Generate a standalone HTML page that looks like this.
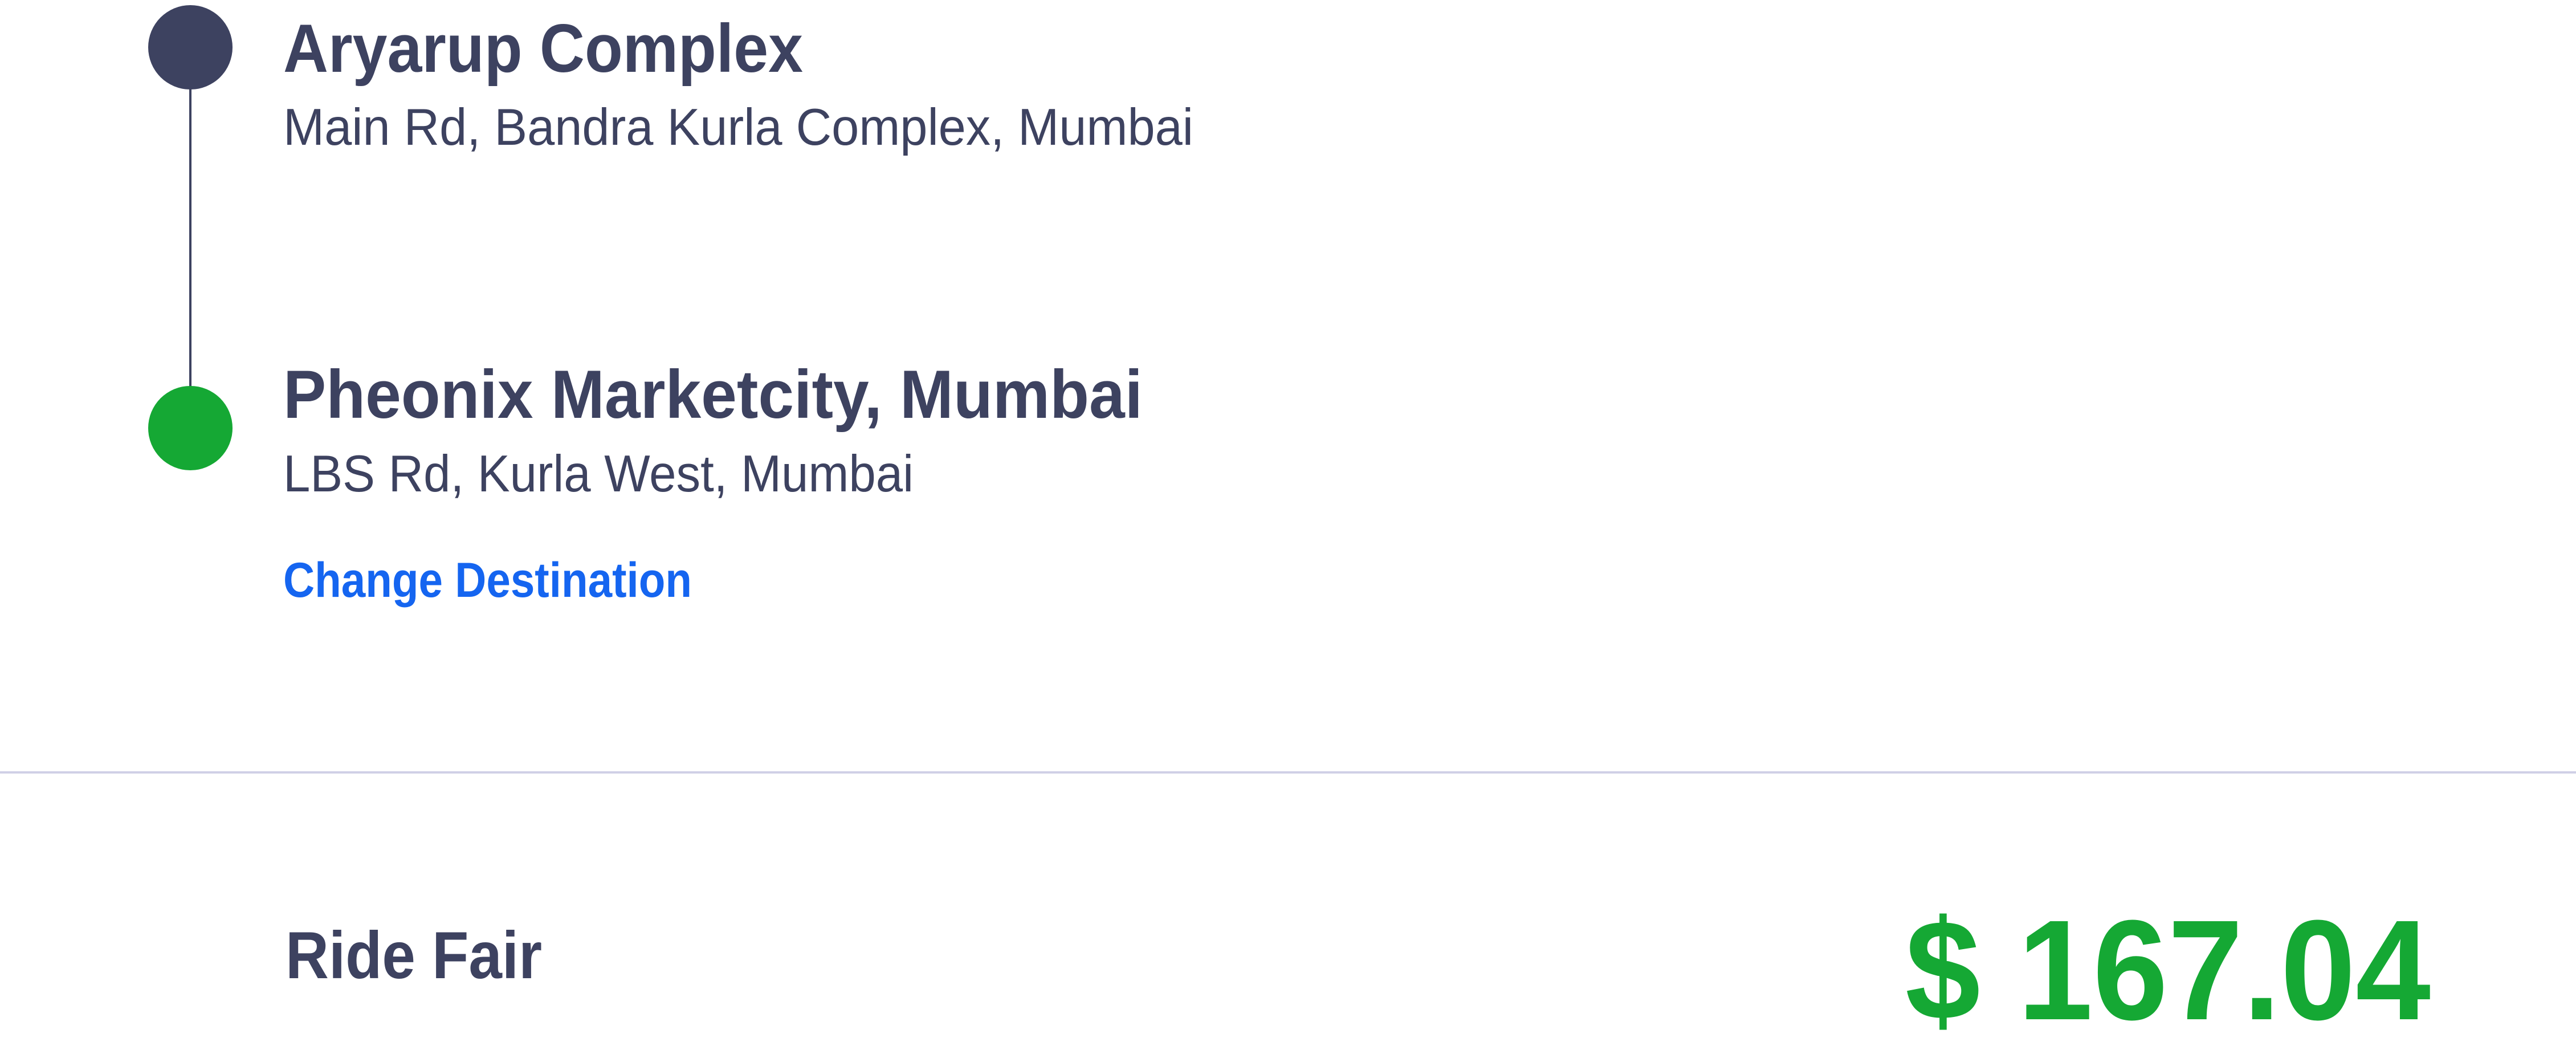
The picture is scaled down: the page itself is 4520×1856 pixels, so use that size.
<!DOCTYPE html>
<html><head><meta charset="utf-8"><style>
html,body{margin:0;padding:0;background:#fff;width:4520px;height:1856px;overflow:hidden}
svg{display:block}
</style></head><body>
<svg width="4520" height="1856" viewBox="0 0 4520 1856" xmlns="http://www.w3.org/2000/svg" font-family="Liberation Sans, Arial, sans-serif">
<line x1="334" y1="150" x2="334" y2="690" stroke="#3d4260" stroke-width="4"/>
<circle cx="334" cy="83" r="74" fill="#3d4260"/>
<circle cx="334" cy="751" r="74" fill="#15a834"/>
<text x="497" y="126" font-size="120" font-weight="bold" fill="#3d4260" textLength="912" lengthAdjust="spacingAndGlyphs">Aryarup Complex</text>
<text x="497" y="254" font-size="91" fill="#3d4260" textLength="1597" lengthAdjust="spacingAndGlyphs">Main Rd, Bandra Kurla Complex, Mumbai</text>
<text x="497" y="733" font-size="120" font-weight="bold" fill="#3d4260" textLength="1508" lengthAdjust="spacingAndGlyphs">Pheonix Marketcity, Mumbai</text>
<text x="497" y="862" font-size="91" fill="#3d4260" textLength="1106" lengthAdjust="spacingAndGlyphs">LBS Rd, Kurla West, Mumbai</text>
<text x="497" y="1047" font-size="86" font-weight="bold" fill="#1565f0" textLength="717" lengthAdjust="spacingAndGlyphs">Change Destination</text>
<rect x="0" y="1353" width="4520" height="4" fill="#d0d0e6"/>
<text x="501" y="1716" font-size="117" font-weight="bold" fill="#3d4260" textLength="450" lengthAdjust="spacingAndGlyphs">Ride Fair</text>
<text x="3343" y="1788" font-size="250" font-weight="bold" fill="#15a834" textLength="922" lengthAdjust="spacingAndGlyphs">$ 167.04</text>
</svg>
</body></html>
